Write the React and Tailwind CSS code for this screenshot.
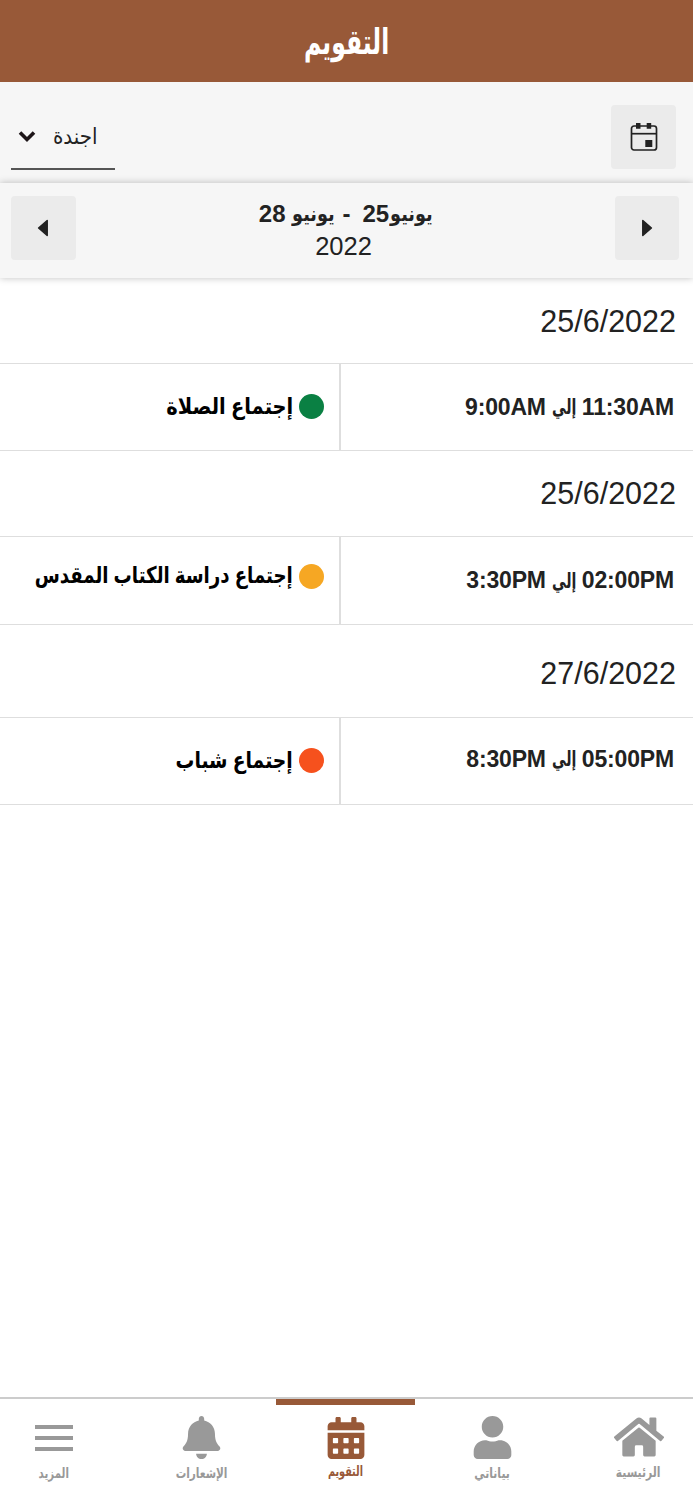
import React from "react";
import { FaHome, FaUser, FaBell, FaCalendarAlt } from "react-icons/fa";

const events = [
  {
    date: "25/6/2022",
    from: "9:00AM",
    to: "11:30AM",
    title: "إجتماع الصلاة",
    dot: "bg-[#0a8043]",
    head: "h-[86px] pt-1",
    row: "h-[88px]",
    timePad: "",
    titlePad: "pb-0.5",
    titleScale: "scale-x-[0.845]",
    dotPad: "mb-0.5",
  },
  {
    date: "25/6/2022",
    from: "3:30PM",
    to: "02:00PM",
    title: "إجتماع دراسة الكتاب المقدس",
    dot: "bg-[#f6a723]",
    head: "h-[85px] pt-px",
    row: "h-[89px]",
    timePad: "",
    titlePad: "pb-2.5",
    titleScale: "scale-x-[0.79]",
    dotPad: "mb-2",
  },
  {
    date: "27/6/2022",
    from: "8:30PM",
    to: "05:00PM",
    title: "إجتماع شباب",
    dot: "bg-[#f6511d]",
    head: "h-[92px] pt-[6px]",
    row: "h-[88px]",
    timePad: "pb-1",
    titlePad: "pb-px",
    titleScale: "scale-x-[0.815]",
    dotPad: "mb-0.5",
  },
];

const EventRow = ({ event }) => {
  return (
    <section>
      <div className={`${event.head} flex items-center pr-[17px] text-[30.5px] text-[#222]`}>
        {event.date}
      </div>
      <div className={`${event.row} flex border-y border-[#dedede]`}>
        {/* Time */}
        <div className={`${event.timePad} w-[352px] flex items-center pr-[19px] text-[23px] tracking-[-0.17px] font-bold text-[#222]`}>
          <bdi>{event.to}</bdi>
          <span className="w-6 mx-1.5 text-[21px] tracking-normal">
            <span className="inline-block origin-right scale-x-[0.67]">إلي</span>
          </span>
          <bdi>{event.from}</bdi>
        </div>
        {/* Title */}
        <div className="w-[341px] flex items-center border-r-2 border-[#dedede] pr-[15px]">
          <span className={`${event.dot} ${event.dotPad} shrink-0 w-[25px] h-[25px] rounded-full ml-1.5`}></span>
          <span className={`${event.titlePad} w-[290px] text-[23px] font-bold text-black whitespace-nowrap`}>
            <span className={`${event.titleScale} inline-block origin-right`}>{event.title}</span>
          </span>
        </div>
      </div>
    </section>
  );
};

const NavItem = ({ icon, label, className, labelClass }) => {
  return (
    <div className={`${className} flex flex-col items-center`}>
      <span className="h-[43px] flex items-center">{icon}</span>
      <span className={`${labelClass} leading-5 whitespace-nowrap`}>{label}</span>
    </div>
  );
};

const App = () => {
  return (
    <div
      dir="rtl"
      className="w-[693px] h-[1500px] flex flex-col bg-white overflow-hidden font-['Liberation_Sans','DejaVu_Sans',sans-serif]"
    >
      <header className="h-[82px] pt-0.5 flex items-center justify-center bg-[#985938] text-white text-[35px] font-bold">
        <span className="scale-x-[0.67]">التقويم</span>
      </header>

      {/* View selector */}
      <div className="h-[101px] flex justify-between bg-[#f6f6f6] pt-[23px] pr-[17px] pl-[11px]">
        <button className="w-[65px] h-[64px] flex items-center justify-center rounded-sm bg-[#ebebeb]">
          <svg width="28" height="30" viewBox="0 0 28 30">
            <rect x="1.5" y="4" width="25" height="24" rx="2.5" fill="none" stroke="#222" strokeWidth="1.7" />
            <path d="M1.5 11.7h25" stroke="#222" strokeWidth="1.7" />
            <path d="M6 1h4.5v5.7H6zM16.7 1h4.5v5.7h-4.5zM15.3 18h7v7h-7z" fill="#222" />
          </svg>
        </button>
        <button className="w-[104px] h-[65px] flex items-center justify-between border-b-2 border-[#555] pr-[18px] pl-[7px] text-[22px] text-[#222]">
          <span className="origin-right scale-x-[0.9]">اجندة</span>
          <svg width="18" height="14" viewBox="0 0 18 14">
            <path d="M2 2.5l7 7 7-7" fill="none" stroke="#1d1518" strokeWidth="3.6" />
          </svg>
        </button>
      </div>

      {/* Date range */}
      <div className="relative h-[95px] flex justify-between bg-[#f6f6f6] pt-[13px] pr-[14px] pl-[11px] shadow-[0_0_7px_rgba(0,0,0,0.25)]">
        <button className="w-[64px] h-[64px] flex items-center justify-center rounded-sm bg-[#ebebeb]">
          <svg width="12" height="18" viewBox="0 0 12 18">
            <path d="M1.8 1.5v15L10.4 9z" fill="#222" stroke="#222" strokeWidth="1.5" strokeLinejoin="round" />
          </svg>
        </button>
        <div className="flex flex-col items-center pt-0.5 text-[#222]">
          <div className="h-8 flex items-center text-[24px] font-bold whitespace-pre">
            <span className="w-[43px] text-[21px]">
              <span className="inline-block origin-right scale-x-[0.84]">يونيو</span>
            </span>
            <span>25</span>
            <span className="w-[28px] pr-1 text-center">-</span>
            <span className="w-[43px] text-[21px]">
              <span className="inline-block origin-right scale-x-[0.84]">يونيو</span>
            </span>
            <span className="mr-[6px]">28</span>
          </div>
          <div className="h-8 flex items-center pr-1 text-[25.5px]">2022</div>
        </div>
        <button className="w-[65px] h-[64px] flex items-center justify-center rounded-sm bg-[#ebebeb]">
          <svg className="mr-px" width="12" height="18" viewBox="0 0 12 18">
            <path d="M10.2 1.5v15L1.6 9z" fill="#222" stroke="#222" strokeWidth="1.5" strokeLinejoin="round" />
          </svg>
        </button>
      </div>

      <main className="flex-1 -mt-px">
        {events.map((event, i) => (
          <EventRow key={i} event={event} />
        ))}
      </main>

      {/* Bottom navigation */}
      <nav className="h-[103px] flex border-t-2 border-[#ccc] text-[#999] text-[14px] font-bold">
        <NavItem className="w-[109px] pt-4" labelClass="mt-1 scale-x-[0.77]" icon={<FaHome size={50} />} label="الرئيسية" />
        <NavItem className="w-[169px] pt-[17px] pr-[14px]" labelClass="mt-1 scale-x-[0.77]" icon={<FaUser size={43} />} label="بياناتي" />
        <NavItem
          className="w-[139px] pt-[11px] border-t-[6px] border-[#985938] text-[#985938]"
          labelClass="mt-0.5 scale-x-[0.69]"
          icon={<FaCalendarAlt size={42} />}
          label="التقويم"
        />
        <NavItem className="w-[167px] pt-[17px] pl-[18px]" labelClass="mt-1 scale-x-[0.75]" icon={<FaBell size={43} />} label="الإشعارات" />
        <NavItem
          className="w-[109px] pt-[17px] pr-px"
          labelClass="mt-1 scale-x-[0.73]"
          icon={
            <span className="w-[38px] flex flex-col gap-[7px]">
              <span className="h-1 bg-[#999]"></span>
              <span className="h-1 bg-[#999]"></span>
              <span className="h-1 bg-[#999]"></span>
            </span>
          }
          label="المزيد"
        />
      </nav>
    </div>
  );
};

export default App;
